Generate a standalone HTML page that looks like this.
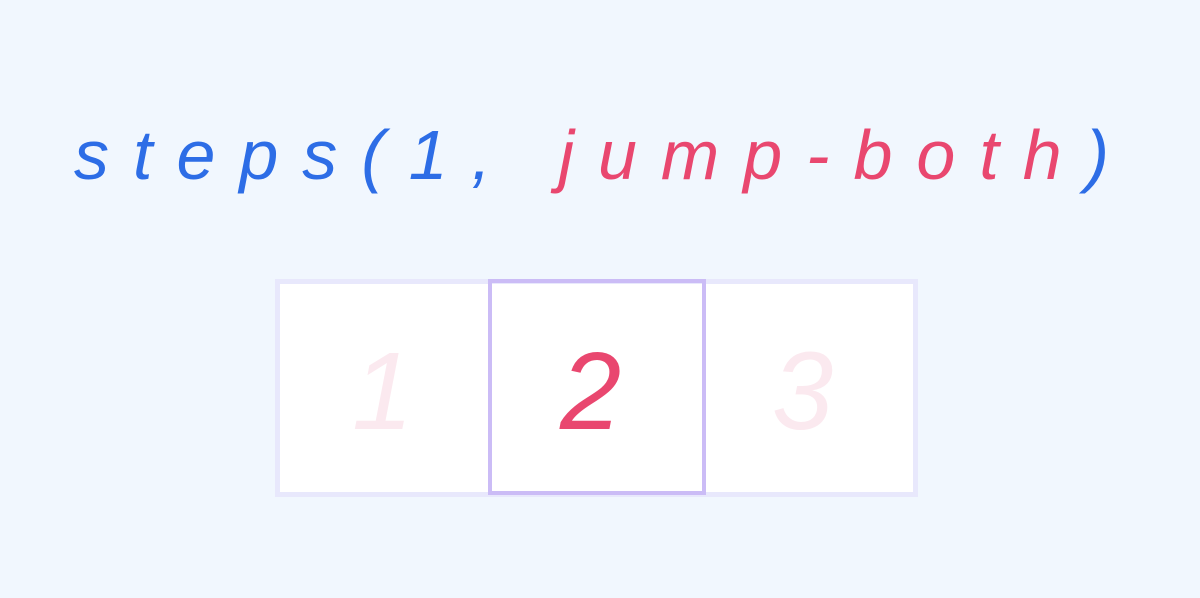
<!DOCTYPE html>
<html><head><style>
html,body{margin:0;padding:0;}
body{width:1200px;height:598px;background:#f1f7fe;position:relative;overflow:hidden;font-family:"Liberation Sans",sans-serif;}
.t{position:absolute;left:74px;top:120px;font-size:70px;font-style:italic;letter-spacing:24px;white-space:nowrap;color:#2d6de6;line-height:1;}
.t .p{color:#e9476f;}
.outer{position:absolute;left:275px;top:279px;width:633px;height:208px;border:5px solid #e8e8fc;background:#fff;}
.mid{position:absolute;left:488px;top:279px;width:210px;height:208px;border:4px solid #cbbcf6;}
.n{position:absolute;top:337px;font-size:110px;font-style:italic;line-height:1;}
</style></head><body>
<div class="t">steps(1, <span class="p">jump-both</span>)</div>
<div class="outer"></div>
<div class="mid"></div>
<div class="n" style="left:352px;color:#fbe9ef;">1</div>
<div class="n" style="left:560px;color:#e9476f;">2</div>
<div class="n" style="left:772px;color:#fbe9ef;">3</div>
</body></html>
